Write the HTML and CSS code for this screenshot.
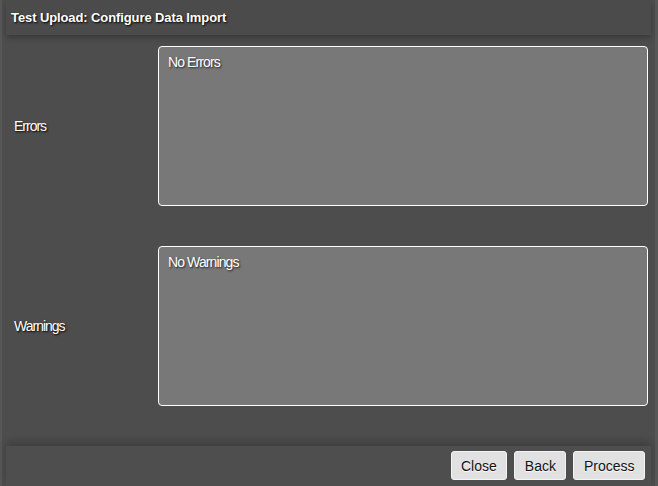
FILE: index.html
```html
<!DOCTYPE html>
<html lang="en">
<head>
  <meta charset="UTF-8" />
  <title>Test Upload: Configure Data Import</title>
  <link rel="stylesheet" href="styles.css">
</head>
<body>
  <div class="dialog">
    <header class="dialog-header">
      <h1>Test Upload: Configure Data Import</h1>
    </header>

    <div class="dialog-body">
      <div class="row">
        <label class="row-label">Errors</label>
        <div class="result-box">No Errors</div>
      </div>
      <div class="row">
        <label class="row-label">Warnings</label>
        <div class="result-box">No Warnings</div>
      </div>
    </div>

    <footer class="dialog-footer">
      <button>Close</button>
      <button>Back</button>
      <button>Process</button>
    </footer>
  </div>
</body>
</html>
```

FILE: styles.css
```css
* {
  box-sizing: border-box;
}

body {
  margin: 0;
  background: #575757;
  font-family: "Liberation Sans", Arial, sans-serif;
  height: 486px;
  overflow: hidden;
}

.dialog {
  margin: 0 3px 0 2px;
  height: 486px;
  padding: 0 4px;
  background: #4d4d4d;
  display: flex;
  flex-direction: column;
}

.dialog-header {
  height: 35px;
  background: #4b4b4b;
  box-shadow: 0 3px 6px rgb(0 0 0 / 0.25);
  display: flex;
  align-items: center;
  padding-left: 5px;
  position: relative;
}

.dialog-header h1 {
  margin: 0;
  font-size: 13px;
  font-weight: bold;
  color: #fff;
  letter-spacing: -0.1px;
  text-shadow: 1px 1px 2px #000;
}

.dialog-body {
  flex: 1;
  padding: 11px 3px 0 8px;
  display: flex;
  flex-direction: column;
  gap: 40px;
}

.row {
  display: flex;
  align-items: center;
}

.row-label {
  width: 144px;
  color: #fff;
  font-size: 14px;
  letter-spacing: -1px;
  text-shadow: 1px 1px 2px #000;
}

.result-box {
  width: 490px;
  height: 160px;
  background: #787878;
  border: 1px solid #fff;
  border-radius: 4px;
  padding: 7px 9px;
  color: #fff;
  font-size: 14px;
  letter-spacing: -0.9px;
  text-shadow: 1px 1px 2px #222;
}

.dialog-footer {
  height: 40px;
  background: #4e4e4e;
  box-shadow: 0 -4px 8px rgb(0 0 0 / 0.2);
  display: flex;
  justify-content: flex-end;
  align-items: flex-start;
  gap: 7px;
  padding: 5px 6px 0 0;
}

.dialog-footer button {
  height: 29px;
  padding: 0 9.5px;
  background: #e1e1e1;
  border: 1px solid #f4f4f4;
  border-radius: 3px;
  font-family: "Liberation Sans", Arial, sans-serif;
  font-size: 14px;
  color: #111;
  text-shadow: 0 1px 1px #fff;
  cursor: pointer;
}
```
